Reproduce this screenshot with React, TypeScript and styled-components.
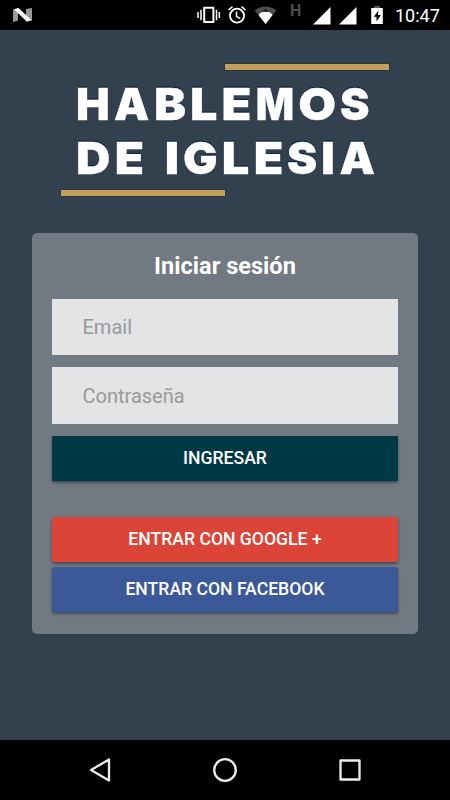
import React from "react";
import styled, { createGlobalStyle } from "styled-components";

const GlobalStyle = createGlobalStyle`
  * { box-sizing: border-box; }
  body { margin: 0; background: #33404d; font-family: Roboto, "Liberation Sans", sans-serif; }
`;

const Screen = styled.div`
  display: flex;
  flex-direction: column;
  width: 450px;
  height: 800px;
  background: #33404d;
  overflow: hidden;
`;

const StatusBar = styled.header`
  display: flex;
  align-items: flex-start;
  height: 30px;
  flex: none;
  padding: 0 10px 0 13px;
  background: #000;
  color: #fff;
`;

const StatusIcon = styled.svg<{ $gap?: number }>`
  display: block;
  flex: none;
  margin-left: ${(p) => p.$gap ?? 0}px;
`;

const Spacer = styled.div`
  flex: 1;
`;

const NetworkLabel = styled.span`
  width: 12px;
  margin-left: 13px;
  font-size: 16px;
  font-weight: 700;
  line-height: 22px;
  color: #4b4b4b;
`;

const Clock = styled.time`
  width: 45px;
  margin-left: 12px;
  font-size: 18px;
  line-height: 31px;
  white-space: nowrap;
`;

const Content = styled.main`
  display: flex;
  flex: 1;
  flex-direction: column;
  align-items: center;
`;

const Logo = styled.svg`
  display: block;
  flex: none;
  margin-top: 30px;
  font-family: Inter, sans-serif;
  font-size: 44.5px;
  font-weight: 900;
`;

const LogoFace = styled.g`
  fill: #fff;
  stroke: #fff;
  stroke-width: 0.3;
  filter: drop-shadow(0 0.7px 0.4px #0d2340) drop-shadow(0 -0.3px 0.3px #0d2340);
`;

const Card = styled.form`
  display: flex;
  flex-direction: column;
  width: 386px;
  height: 401px;
  margin-top: 32.5px;
  padding: 17.5px 20px 20px;
  border-radius: 5px;
  background: #717982;
`;

const Title = styled.h1`
  margin: 0 0 16.5px;
  font-size: 23.6px;
  font-weight: 700;
  line-height: 32px;
  text-align: center;
  color: #fff;
`;

const Field = styled.input`
  flex: none;
  width: 100%;
  height: 56.5px;
  margin: 0 0 12px;
  padding: 1px 30.5px 0;
  border: 0;
  border-radius: 0;
  background: #e2e4e6;
  font: 400 20px Roboto, sans-serif;
  color: #333;
  outline: 0;
  &::placeholder { color: #999; opacity: 1; }
`;

const Button = styled.button<{ $color: string; $after?: number; $primary?: boolean }>`
  flex: none;
  width: 100%;
  height: 45px;
  margin: 0 0 ${(p) => p.$after ?? 0}px;
  padding: 0 0 ${(p) => (p.$primary ? 1 : 2)}px;
  border: 0;
  border-radius: ${(p) => (p.$primary ? 1 : 2.5)}px;
  background: ${(p) => p.$color};
  box-shadow: 0 2px 3px rgba(20, 30, 40, 0.5);
  font: 500 17.6px Roboto, sans-serif;
  color: #fff;
`;

const NavBar = styled.nav`
  display: flex;
  flex: none;
  align-items: center;
  justify-content: space-between;
  height: 60px;
  padding: 0 85px;
  background: #000;
`;

const NavButton = styled.svg`
  display: block;
  fill: none;
  stroke: #eee;
  stroke-width: 2.3;
  stroke-linejoin: round;
`;

type Letter = [character: string, left: number, right: number];

const lines: { baseline: number; letters: Letter[] }[] = [
  {
    baseline: 119.7,
    letters: [
      ["H", 78.3, 107.7], ["A", 114.5, 149], ["B", 156.2, 184.9], ["L", 192.2, 216.5],
      ["E", 223.7, 250], ["M", 258, 292], ["O", 299.8, 334.7], ["S", 341, 368.3],
    ],
  },
  {
    baseline: 173.7,
    letters: [
      ["D", 78.3, 109], ["E", 117, 142.7], ["I", 167, 177], ["G", 184.6, 216.2],
      ["L", 224, 248.5], ["E", 256, 282], ["S", 288, 316], ["I", 323.3, 332.8], ["A", 340, 374.7],
    ],
  },
];

// Space the typeface leaves on each side of a capital.
const bearings: Record<string, [number, number]> = {
  H: [2.2, 2.2], A: [0.4, 0.4], B: [2.2, 1.2], L: [2.2, 0.9], E: [2.2, 1.4], M: [2.2, 2.2],
  O: [1.5, 1.5], S: [1.1, 1.1], D: [2.2, 1.5], I: [2.2, 2.2], G: [1.5, 1.5],
};

function Wordmark() {
  return (
    <>
      {lines.map((line) => (
        <text key={line.baseline} y={line.baseline}>
          {line.letters.map(([character, left, right]) => {
            const [before, after] = bearings[character];
            return (
              <tspan
                key={left}
                x={left - before}
                textLength={right - left + before + after}
                lengthAdjust="spacingAndGlyphs"
              >
                {character}
              </tspan>
            );
          })}
        </text>
      ))}
    </>
  );
}

export default function App() {
  return (
    <>
      <GlobalStyle />
      <Screen>
        <StatusBar>
          <StatusIcon width="20" height="30" viewBox="13 0 20 30">
            <path d="M13 9.5 18 8v12.5l-5 1.5zM26 9l6-1v13l-6-2z" fill="#999" />
            <path d="M14.2 9.6 18.5 8 31.3 20 27 21.8z" fill="#fff" />
          </StatusIcon>
          <Spacer />
          <StatusIcon width="24" height="30" viewBox="197 0 24 30">
            <path d="M204.2 7.7h9.2v14.4h-9.2z" fill="none" stroke="#fff" strokeWidth="2" strokeLinejoin="round" />
            <path d="M201 9.8v10.4M198 12v6M216.5 9.8v10.4M219.3 12v6" stroke="#fff" strokeWidth="1.5" />
          </StatusIcon>
          <StatusIcon $gap={7} width="18" height="30" viewBox="228 0 18 30">
            <circle cx="237" cy="15.7" r="7" fill="none" stroke="#fff" strokeWidth="1.8" />
            <path d="m228.5 10 4-3.4M245.5 10l-4-3.4M236.5 11.5v4.8l3.8 2.3" fill="none" stroke="#fff" strokeWidth="1.5" />
          </StatusIcon>
          <StatusIcon $gap={8} width="23" height="30" viewBox="254 0 23 30">
            <path d="M254.6 10.3Q265.5 2.5 276.6 10.3L265.6 24z" fill="#4d4d4d" />
            <path d="M258.7 15.2Q259.8 11.8 265.5 11.8T272.4 15.2L265.6 24z" fill="#fff" />
            <path d="m262 11.8 3.5-3 3.5 3z" fill="#222" />
          </StatusIcon>
          <NetworkLabel>H</NetworkLabel>
          <StatusIcon $gap={11} width="18" height="30" viewBox="313 0 18 30">
            <path d="M330.5 7v17.5h-17.5z" fill="#fff" />
          </StatusIcon>
          <StatusIcon $gap={8} width="18" height="30" viewBox="339 0 18 30">
            <path d="M356.5 7v17.5h-17.5z" fill="#fff" />
          </StatusIcon>
          <StatusIcon $gap={14} width="12" height="30" viewBox="371 0 12 30">
            <path d="M374 6h6v2h-6z" fill="#555" />
            <path d="M371.2 8h11.6v16h-11.6z" fill="#fff" />
            <path d="m378.4 10.5-4.6 6.3h2.7v4.7l4.4-6.5H378z" fill="#000" />
          </StatusIcon>
          <Clock>10:47</Clock>
        </StatusBar>
        <Content>
          <Logo width="330" height="140" viewBox="60 60 330 140">
            <path d="M225 64h164v6H225zM61 190h164v6H61z" fill="#c2a05a" stroke="#122f4a" strokeWidth="1" paintOrder="stroke" />
            <LogoFace><Wordmark /></LogoFace>
          </Logo>
          <Card onSubmit={(e: React.FormEvent) => e.preventDefault()}>
            <Title>Iniciar sesión</Title>
            <Field type="email" placeholder="Email" />
            <Field type="password" placeholder="Contraseña" />
            <Button $color="#003845" $after={36.5} $primary>INGRESAR</Button>
            <Button type="button" $color="#dc4437" $after={5}>ENTRAR CON GOOGLE +</Button>
            <Button type="button" $color="#3b5998">ENTRAR CON FACEBOOK</Button>
          </Card>
        </Content>
        <NavBar>
          <NavButton width="30" height="30" viewBox="85 755 30 30">
            <path d="M91 770 109 759.5v21z" />
          </NavButton>
          <NavButton width="30" height="30" viewBox="210 755 30 30">
            <circle cx="225" cy="770" r="10.8" />
          </NavButton>
          <NavButton width="30" height="30" viewBox="335 755 30 30">
            <path d="M340.5 760.5h19v19h-19z" />
          </NavButton>
        </NavBar>
      </Screen>
    </>
  );
}
